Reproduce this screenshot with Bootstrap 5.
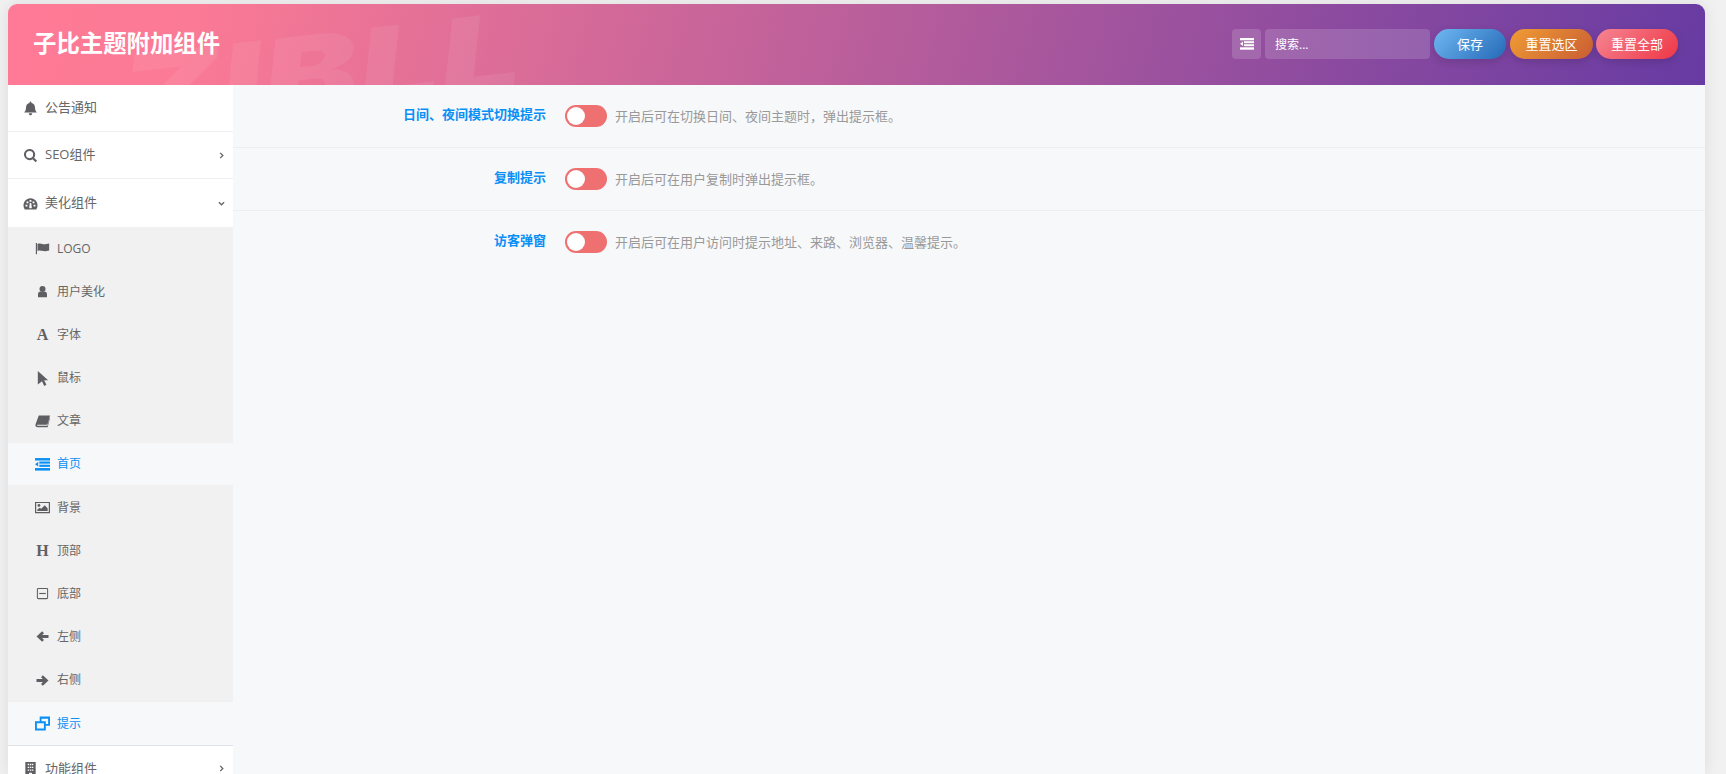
<!doctype html>
<html lang="zh-CN">
<head>
<meta charset="utf-8">
<title>子比主题附加组件</title>
<link href="https://cdn.jsdelivr.net/npm/bootstrap@5.3.0/dist/css/bootstrap.min.css" rel="stylesheet">
<style>
html,body{height:100%;}
body{background:#f1f1f1;font-family:"Open Sans","Noto Sans CJK SC",sans-serif;color:#666;overflow:hidden;padding:4px 21px 0 8px;}
.panel-shell{height:100%;background:#f7f8fa;border-radius:9px 9px 0 0;box-shadow:0 0 16px rgba(0,0,0,.09);}
.panel-head{height:81px;flex:none;overflow:hidden;border-radius:9px 9px 0 0;background:linear-gradient(105deg,#ff7a96 0%,#fb7a95 11%,#673ba3 100%);position:relative;padding-left:25px;padding-right:27px;}
.head-mark{position:absolute;left:107px;top:39px;font:italic 900 106px/1 "Inter",sans-serif;letter-spacing:1px;color:rgba(255,255,255,.07);transform:rotate(-6.5deg) scaleX(1.34);transform-origin:left top;white-space:nowrap;pointer-events:none;}
.head-title{position:relative;font-size:23.4px;font-weight:700;color:#fff;margin:0;line-height:30px;padding-bottom:4px;}
.head-tools{position:relative;gap:4px;margin-bottom:1px;}
.tool-icon{width:29px;height:30px;border-radius:4px;background:rgba(255,255,255,.15);}
.tool-search.form-control{width:165px;height:30px;min-height:30px;border:0;border-radius:4px;background:rgba(255,255,255,.15);font-size:12px;color:#fff;padding:0 10px;box-shadow:none;}
.tool-search.form-control::placeholder{color:#fff;opacity:1;}
.pill{height:30px;border:0;border-radius:15px;color:#fff;font-size:13px;padding:0;line-height:30px;box-shadow:0 3px 8px rgba(0,0,0,.14);}
.pill-save{width:72px;background:linear-gradient(135deg,#6fb8f2,#2569b7);}
.pill-sel{width:83px;background:linear-gradient(135deg,#f09c34,#c95d34);}
.pill-all{width:82px;background:linear-gradient(135deg,#f68593,#ee3644);margin-left:-1px;}
.side{width:225px;flex:none;background:#fff;}
.side-top{height:47px;font-size:13px;color:#666;padding:0 8px 0 15px;border-bottom:1px solid #f0f0f2;text-decoration:none;}
.side-top svg{width:15px;height:15px;margin-right:7px;flex:none;fill:#5f5f63;}
.side-top svg.chev{margin-left:auto;width:7px;height:7px;fill:none;stroke:#666;stroke-width:1.5;margin-right:0;}
.side-top.open{height:48px;border-bottom:0;}
.side-sub{background:#f1f1f1;}
.side-item{height:43.17px;font-size:12px;color:#666;padding:1px 0 0 27px;border-bottom:1px solid #f0f0f0;text-decoration:none;}
.side-item:last-child{border-bottom:0;}
.side-item .ico{width:15px;height:15px;margin-right:7px;flex:none;fill:#5f5f63;display:flex;align-items:center;justify-content:center;font:700 16px/15px "Liberation Serif",serif;color:#5f5f63;}
.side-item.on{background:#f7f8fa;color:#0a90f5;}
.side-item.on .ico{fill:#0a90f5;}
.main-pane{min-width:0;}
.opt-row{height:63px;padding-top:20px;border-bottom:1px solid #edeef0;}
.opt-row:last-child{border-bottom:0;}
.opt-label{width:313px;flex:none;text-align:right;font-size:13px;font-weight:700;line-height:18px;color:#0a90f5;margin-right:19px;}
.opt-switch{width:42px;height:22px;flex:none;border-radius:11px;background:#ee7070;padding:2px;margin-right:8px;}
.opt-switch i{display:block;width:18px;height:18px;border-radius:50%;background:#fff;}
.opt-desc{font-size:13px;line-height:22px;color:#999;margin:0;}
</style>
</head>
<body>
<div class="panel-shell d-flex flex-column">
  <header class="panel-head d-flex align-items-center justify-content-between">
    <div class="head-mark" aria-hidden="true">ZIBLL</div>
    <h1 class="head-title">子比主题附加组件</h1>
    <div class="head-tools d-flex align-items-center">
      <span class="tool-icon d-flex align-items-center justify-content-center">
        <svg width="14" height="12" viewBox="0 0 14 12" fill="#fff"><rect width="14" height="2.300"/><rect x="4" y="3.200" width="10" height="2"/><rect x="4" y="6.200" width="10" height="2"/><rect y="9.300" width="14" height="2.400"/><path d="M0 5.700 3 3.500v4.400z"/></svg>
      </span>
      <input class="form-control tool-search" type="text" placeholder="搜索...">
      <button class="btn pill pill-save" type="button">保存</button>
      <button class="btn pill pill-sel" type="button">重置选区</button>
      <button class="btn pill pill-all" type="button">重置全部</button>
    </div>
  </header>
  <div class="d-flex flex-grow-1 overflow-hidden">
    <nav class="side">
      <a class="side-top d-flex align-items-center" href="#"><svg viewBox="0 0 16 16"><path d="M8 .5c.6 0 1 .4 1 1v.7c2.400.5 3.800 2.400 3.800 4.800 0 3 .8 4 2 5.200H1.200C2.400 11 3.200 10 3.200 7c0-2.400 1.400-4.300 3.800-4.800v-.7c0-.6.400-1 1-1zM6.200 13h3.600c0 1.200-.8 2.300-1.800 2.300S6.200 14.200 6.200 13z"/></svg>公告通知</a>
      <a class="side-top d-flex align-items-center" href="#"><svg viewBox="0 0 16 16"><path d="M7 1a6 6 0 0 1 4.800 9.500l3.200 3.200-1.600 1.600-3.200-3.200A6 6 0 1 1 7 1zm0 2.200a3.800 3.800 0 1 0 0 7.600 3.800 3.800 0 0 0 0-7.600z" fill-rule="evenodd"/></svg>SEO组件<svg class="chev" viewBox="0 0 8 8"><path d="M2.500 1 5.500 4l-3 3"/></svg></a>
      <a class="side-top open d-flex align-items-center" href="#"><svg viewBox="0 0 16 16"><path fill-rule="evenodd" d="M8 2.500a7.500 7.500 0 0 1 6.500 11.200l-.4.800H1.900l-.4-.8A7.500 7.500 0 0 1 8 2.500zM7 4.200h2v2H7zM3.800 5.800h2v2h-2zM10.200 5.800h2v2h-2zM2.700 9.200h2v2h-2zM11.300 9.200h2v2h-2zM7.200 7.500h1.600l.4 3.800a1.300 1.300 0 1 1-2.400 0z"/></svg>美化组件<svg class="chev" viewBox="0 0 8 8"><path d="M1 2.500 4 5.500l3-3"/></svg></a>
      <div class="side-sub">
        <a class="side-item d-flex align-items-center" href="#"><svg class="ico" viewBox="-1 -1 18 18"><path d="M0 1.500h1.400V15H0zM2 2.500c2.800-1.200 4.500 0 7 .3 2.300.2 3.900-.3 7-.9v8.400c-3 .8-4.700 1.100-7 .8-2.500-.3-4.200-1.400-7-.2z"/></svg>LOGO</a>
        <a class="side-item d-flex align-items-center" href="#"><svg class="ico" viewBox="-2 -2 20 20"><circle cx="8" cy="4.500" r="4"/><path d="M2 15.500v-4C2 9.300 3.600 8.200 5.200 7.900c1.600 1.200 4 1.200 5.600 0 1.600.3 3.200 1.400 3.200 3.600v4z"/></svg>用户美化</a>
        <a class="side-item d-flex align-items-center" href="#"><span class="ico">A</span>字体</a>
        <a class="side-item d-flex align-items-center" href="#"><svg class="ico" viewBox="0 0 16 16"><path d="M3 0 14 9.800H9.800l2.400 4.900-2.400 1.300-2.300-5.200L3 14.500z"/></svg>鼠标</a>
        <a class="side-item d-flex align-items-center" href="#"><svg class="ico" viewBox="0 0 16 16"><path d="M4 1.500h12l-2.500 9.200c-.2.600-.5.800-1 .8H3c-.8 0-.9.700-.6 1.100h10.900l2.300-8.600.4.500-2.500 9.500H2.500C.8 14 0 12.500.6 11z"/></svg>文章</a>
        <a class="side-item on d-flex align-items-center" href="#"><svg class="ico" viewBox="0 0 14 12"><rect width="14" height="2.300"/><rect x="4" y="3.200" width="10" height="2"/><rect x="4" y="6.200" width="10" height="2"/><rect y="9.300" width="14" height="2.400"/><path d="M0 5.700 3 3.500v4.400z"/></svg>首页</a>
        <a class="side-item d-flex align-items-center" href="#"><svg class="ico" viewBox="0 0 16 14"><path fill-rule="evenodd" d="M0 1h16v12H0zm1.300 1.300v9.400h13.400V2.300z"/><circle cx="4.200" cy="4.800" r="1.500"/><path d="M2.500 10.700V9l2.500-1.800 1.500 1.200L10.500 4.500l3 3.500v2.700z"/></svg>背景</a>
        <a class="side-item d-flex align-items-center" href="#"><span class="ico">H</span>顶部</a>
        <a class="side-item d-flex align-items-center" href="#"><svg class="ico" viewBox="0 0 16 16"><path fill-rule="evenodd" d="M3.500 2h9A1.500 1.500 0 0 1 14 3.500v9a1.500 1.500 0 0 1-1.500 1.500h-9A1.500 1.500 0 0 1 2 12.500v-9A1.500 1.500 0 0 1 3.500 2zm0 1.100a.4.400 0 0 0-.4.400v9c0 .2.200.4.400.4h9c.2 0 .4-.2.400-.4v-9a.4.400 0 0 0-.4-.4z"/><rect x="4.500" y="7.400" width="7" height="1.200"/></svg>底部</a>
        <a class="side-item d-flex align-items-center" href="#"><svg class="ico" viewBox="-2 -2 20 20"><path d="M7.500 1 10 3.500 7.500 6H16v4H7.500l2.500 2.500L7.500 15 0 8z"/></svg>左侧</a>
        <a class="side-item d-flex align-items-center" href="#"><svg class="ico" viewBox="-2 -2 20 20"><path d="M8.500 1 6 3.500 8.500 6H0v4h8.500L6 12.500 8.500 15 16 8z"/></svg>右侧</a>
        <a class="side-item on d-flex align-items-center" href="#"><svg class="ico" viewBox="0 0 16 16"><path fill-rule="evenodd" d="M5 .5h11v10h-4.500v5H0V5.500h5zM7 2.800v2.700h4.500v3H14V2.800zM2 7.800v5.500h7.500V7.800z"/></svg>提示</a>
      </div>
      <a class="side-top d-flex align-items-center border-top" href="#"><svg viewBox="0 0 16 16"><path fill-rule="evenodd" d="M2.500 1h11v14H9.500v-2.500h-3V15h-4zM5 3v1.500h1.500V3zM7.300 3v1.500h1.500V3zM9.500 3v1.500H11V3zM5 6v1.500h1.500V6zM7.300 6v1.500h1.500V6zM9.500 6v1.500H11V6zM5 9v1.500h1.500V9zM7.300 9v1.500h1.500V9zM9.500 9v1.500H11V9z"/></svg>功能组件<svg class="chev" viewBox="0 0 8 8"><path d="M2.500 1 5.500 4l-3 3"/></svg></a>
    </nav>
    <main class="main-pane flex-grow-1">
      <div class="opt-row d-flex align-items-start">
        <div class="opt-label">日间、夜间模式切换提示</div>
        <span class="opt-switch"><i></i></span>
        <p class="opt-desc">开启后可在切换日间、夜间主题时，弹出提示框。</p>
      </div>
      <div class="opt-row d-flex align-items-start">
        <div class="opt-label">复制提示</div>
        <span class="opt-switch"><i></i></span>
        <p class="opt-desc">开启后可在用户复制时弹出提示框。</p>
      </div>
      <div class="opt-row d-flex align-items-start">
        <div class="opt-label">访客弹窗</div>
        <span class="opt-switch"><i></i></span>
        <p class="opt-desc">开启后可在用户访问时提示地址、来路、浏览器、温馨提示。</p>
      </div>
    </main>
  </div>
</div>
<script src="https://cdn.jsdelivr.net/npm/bootstrap@5.3.0/dist/js/bootstrap.bundle.min.js"></script>
</body>
</html>
